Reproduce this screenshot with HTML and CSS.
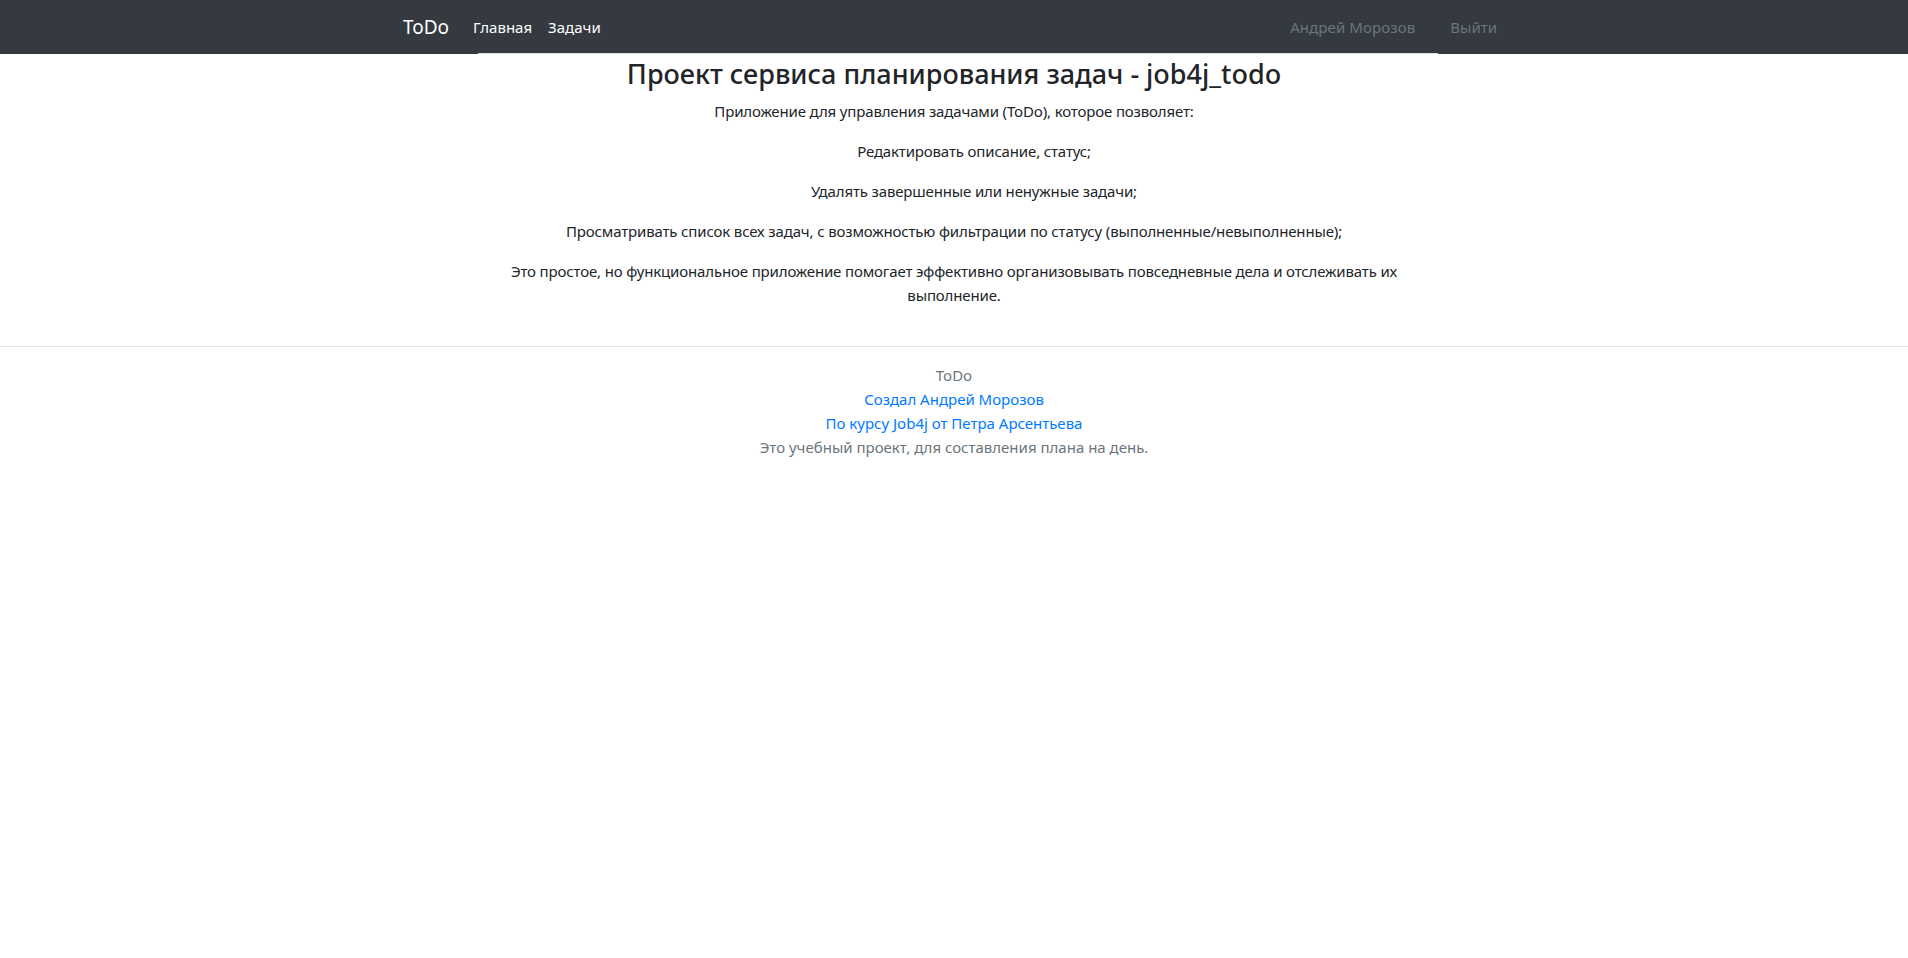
FILE: index.html
```html
<!DOCTYPE html>
<html lang="ru">
<head>
<meta charset="utf-8">
<title>ToDo</title>
<link rel="stylesheet" href="styles.css">
</head>
<body>
<nav class="navbar">
  <div class="nav-container">
    <div class="nav-left">
      <a class="brand" href="#">ToDo</a>
      <a class="nav-link active" href="#">Главная</a>
      <a class="nav-link active" href="#">Задачи</a>
    </div>
    <div class="nav-right">
      <a class="nav-link muted" href="#">Андрей Морозов</a>
      <a class="nav-link muted" href="#">Выйти</a>
    </div>
  </div>
</nav>
<div class="topline"></div>
<main class="main">
  <h3 class="title">Проект сервиса планирования задач - job4j_todo</h3>
  <p>Приложение для управления задачами (ToDo), которое позволяет:</p>
  <ul class="features">
    <li>Редактировать описание, статус;</li>
    <li>Удалять завершенные или ненужные задачи;</li>
  </ul>
  <p>Просматривать список всех задач, с возможностью фильтрации по статусу (выполненные/невыполненные);</p>
  <p>Это простое, но функциональное приложение помогает эффективно организовывать повседневные дела и отслеживать их выполнение.</p>
</main>
<footer class="footer">
  <div class="footer-line muted-text">ToDo</div>
  <div class="footer-line"><a href="#">Создал Андрей Морозов</a></div>
  <div class="footer-line"><a href="#">По курсу Job4j от Петра Арсентьева</a></div>
  <div class="footer-line muted-text">Это учебный проект, для составления плана на день.</div>
</footer>
</body>
</html>
```
FILE: styles.css
```css
* { box-sizing: border-box; }
body {
  margin: 0;
  font-family: "Noto Sans", "Open Sans", sans-serif;
  font-size: 15px;
  line-height: 24px;
  color: #212529;
  background: #fff;
}
a { text-decoration: none; }
.navbar {
  background: #343a40;
  height: 54px;
}
.nav-container {
  width: 1140px;
  margin: 0 auto;
  padding: 0 15px;
  height: 100%;
  display: flex;
  align-items: center;
  justify-content: space-between;
}
.nav-left, .nav-right {
  display: flex;
  align-items: center;
}
.brand {
  color: #fff;
  font-size: 19px;
  margin-right: 16px;
  padding-left: 4px;
}
.nav-link {
  padding: 0 8px;
  font-size: 15px;
}
.nav-link.active { color: #fff; }
.nav-link.muted { color: #6c757d; }
.nav-right .nav-link:first-child { letter-spacing: 0.1px; }
.nav-right .nav-link + .nav-link { margin-left: 19px; }
.nav-right { padding-right: 4px; }
.topline {
  width: 960px;
  margin: 0 0 0 478px;
  height: 1px;
  background: #dee2e6;
  margin-top: -1px;
  position: relative;
}
.main {
  width: 960px;
  margin: 0 auto;
  padding: 0 20px 23px;
  text-align: center;
  font-size: 15px;
  letter-spacing: -0.15px;
}
.title {
  font-size: 27px;
  font-weight: 500;
  line-height: 34px;
  letter-spacing: 0;
  margin: 3px -20px 8px;
}
.main p {
  margin: 0 0 16px;
}
.features {
  list-style: none;
  margin: 0;
  padding: 0 0 0 40px;
}
.features li {
  margin: 0 0 16px;
}
.footer {
  border-top: 1px solid #dee2e6;
  padding-top: 16px;
  text-align: center;
}
.footer-line a { color: #007bff; }
.muted-text { color: #6c757d; }
```
